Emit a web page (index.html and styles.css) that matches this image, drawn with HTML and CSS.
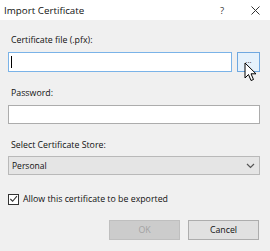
FILE: index.html
```html
<!DOCTYPE html>
<html lang="en">
<head>
  <meta charset="UTF-8" />
  <title>Import Certificate</title>
  <link rel="stylesheet" href="styles.css">
</head>
<body>

  <div class="dialog">
    <div class="titlebar">
      <span class="title">Import Certificate</span>
      <span class="help">?</span>
      <span class="close">
        <svg width="9" height="9" viewBox="0 0 9 9"><path d="M0.5 0.5 L8.5 8.5 M8.5 0.5 L0.5 8.5" stroke="#333" stroke-width="1" fill="none"/></svg>
      </span>
    </div>

    <div class="content">
      <label class="label first">Certificate file (.pfx):</label>
      <div class="file-row">
        <div class="textbox focused"><span class="caret"></span></div>
        <div class="browse-btn">...</div>
      </div>

      <label class="label">Password:</label>
      <div class="textbox"></div>

      <label class="label">Select Certificate Store:</label>
      <div class="select">
        <span>Personal</span>
        <svg width="9" height="6" viewBox="0 0 9 6"><path d="M1 1 L4.5 4.5 L8 1" stroke="#555" stroke-width="1.2" fill="none"/></svg>
      </div>

      <div class="check-row">
        <span class="checkbox">
          <svg width="10" height="10" viewBox="0 0 10 10"><path d="M1.5 5 L4 7.5 L8.8 1.8" stroke="#333" stroke-width="1.2" fill="none"/></svg>
        </span>
        <span>Allow this certificate to be exported</span>
      </div>

      <div class="actions">
        <div class="btn disabled">OK</div>
        <div class="btn">Cancel</div>
      </div>
    </div>

    <svg class="pointer" width="14" height="21" viewBox="0 0 14 21">
      <path d="M1 1 L1 16 L4.5 12.5 L7 18.5 L9.5 17.5 L7 11.8 L12 11.8 Z" fill="#fff" stroke="#000" stroke-width="1" stroke-linejoin="round"/>
    </svg>
  </div>

</body>
</html>
```

FILE: styles.css
```css
* {
  box-sizing: border-box;
}

body {
  margin: 0;
  font-family: 'Open Sans', 'Noto Sans', sans-serif;
  font-size: 8.8px;
  color: #111;
  background: #f0f0f0;
}

.dialog {
  position: relative;
  width: 270px;
  height: 251px;
  background: #f0f0f0;
  overflow: hidden;
}

.titlebar {
  height: 20px;
  background: #fff;
  display: flex;
  align-items: center;
  padding-left: 4px;
}

.title {
  flex: 1;
  font-size: 9.8px;
  color: #111;
}

.help {
  width: 36px;
  text-align: center;
  font-size: 9.5px;
  color: #333;
}

.close {
  width: 30px;
  display: flex;
  justify-content: center;
}

.content {
  display: flex;
  flex-direction: column;
  padding: 0 10px 0 8px;
}

.label {
  height: 12px;
  line-height: 12px;
  padding-left: 3px;
  margin-top: 15px;
  margin-bottom: 6px;
}

.label.first {
  margin-top: 14px;
}

.file-row {
  display: flex;
  gap: 5px;
}

.textbox {
  height: 19px;
  background: #fff;
  border: 1px solid #acacac;
  position: relative;
}

.file-row .textbox {
  flex: 1;
  height: 20px;
}

.textbox.focused {
  border-color: #7ab3e8;
}

.caret {
  position: absolute;
  left: 2px;
  top: 3px;
  width: 1px;
  height: 12px;
  background: #000;
}

.browse-btn {
  width: 23px;
  height: 20px;
  background: #e5f1fb;
  border: 1px solid #6fa8e0;
  text-align: center;
  line-height: 14px;
  font-size: 8px;
  color: #333;
}

.select {
  height: 19px;
  margin-top: -1px;
  background: #e5e5e5;
  border: 1px solid #b9b9b9;
  display: flex;
  align-items: center;
  justify-content: space-between;
  padding: 0 4px 0 3px;
  font-size: 8.5px;
}

.check-row {
  display: flex;
  align-items: center;
  gap: 4px;
  height: 12px;
  margin-top: 18px;
}

.checkbox {
  width: 11px;
  height: 11px;
  background: #fff;
  border: 1px solid #333;
  display: flex;
  align-items: center;
  justify-content: center;
}

.actions {
  display: flex;
  justify-content: flex-end;
  gap: 8px;
  margin-top: 15px;
  padding-right: 1px;
}

.btn {
  width: 71px;
  height: 20px;
  background: #e1e1e1;
  border: 1px solid #adadad;
  display: flex;
  align-items: center;
  justify-content: center;
}

.btn.disabled {
  background: #cccccc;
  border-color: #bfbfbf;
  color: #a3a3a3;
}

.pointer {
  position: absolute;
  left: 244px;
  top: 62px;
}
```
